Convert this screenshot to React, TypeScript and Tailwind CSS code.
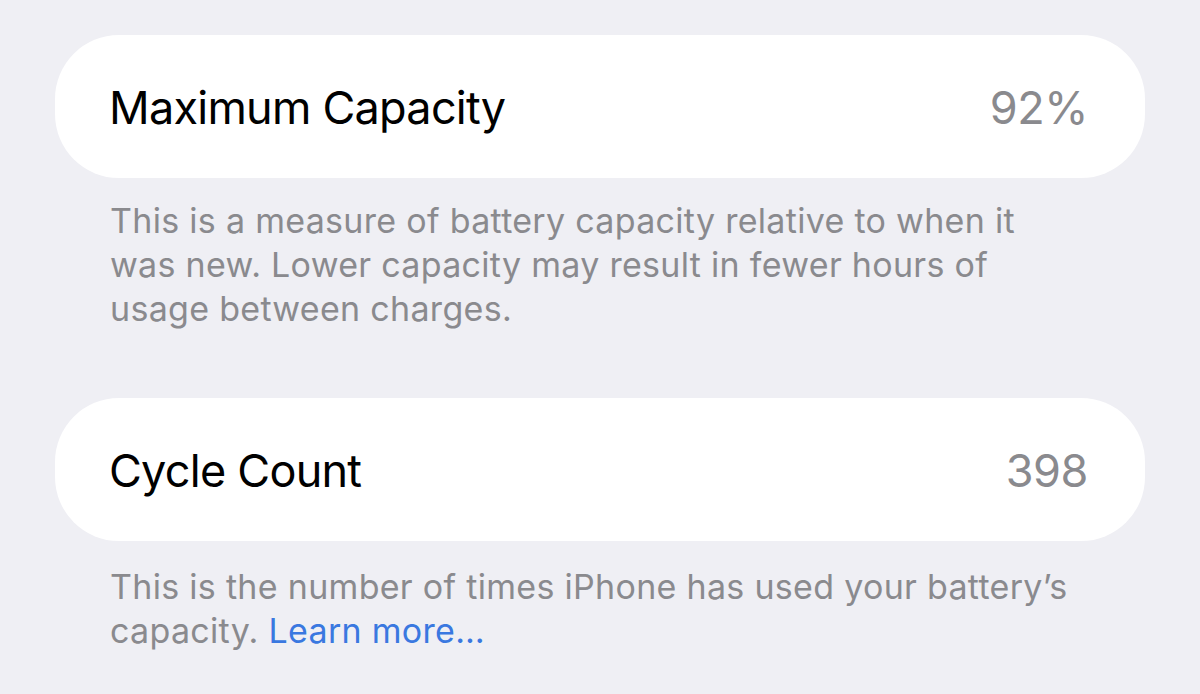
const rows = [
  {
    label: 'Maximum Capacity',
    value: '92%',
    note: 'This is a measure of battery capacity relative to when it was new. Lower capacity may result in fewer hours of usage between charges.',
  },
  {
    label: 'Cycle Count',
    value: '398',
    note: "This is the number of times iPhone has used your battery\u2019s capacity.",
    link: 'Learn more\u2026',
  },
]

export default function App() {
  return (
    <div
      className="min-h-[694px] w-[1200px] bg-[#efeff4] px-[55px] pt-[35px] antialiased"
      style={{ fontFamily: 'Inter, "Noto Sans", sans-serif' }}
    >
      {rows.map((r, i) => (
        <section key={r.label} className={i === 0 ? '' : 'mt-[67px]'}>
          <div className="flex h-[143px] items-center justify-between rounded-[64px] bg-white pl-[54px] pr-[57px] pt-[2px]">
            <span className="text-[45px] leading-[1.2] tracking-[-0.75px] text-black">{r.label}</span>
            <span className="text-[45px] leading-[1.2] tracking-[-0.4px] text-[#8a8a8e]">{r.value}</span>
          </div>
          <p className={`${i === 0 ? 'mt-[21px]' : 'mt-[24px]'} pl-[55px] pr-[60px] text-[34px] leading-[44px] tracking-[0.3px] text-[#8a8a8e]`}>
            {r.note}
            {r.link && <> <a className="text-[#3a78e0]">{r.link}</a></>}
          </p>
        </section>
      ))}
    </div>
  )
}
